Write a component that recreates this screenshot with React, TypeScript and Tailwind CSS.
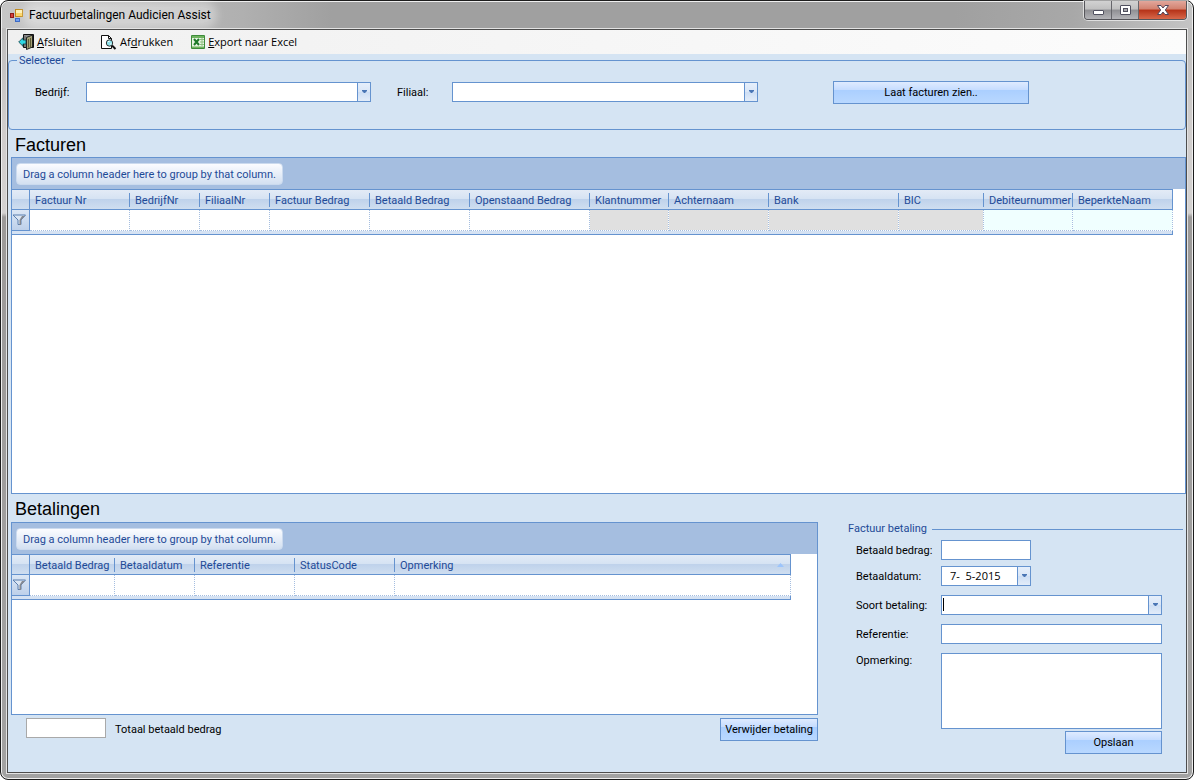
import type { ReactNode } from 'react';

interface Column {
  label: string;
  width: string;
  cell?: string;
  sorted?: boolean;
}

const invoiceColumns: Column[] = [
  { label: 'Factuur Nr', width: 'w-[100px]' },
  { label: 'BedrijfNr', width: 'w-[70px]' },
  { label: 'FiliaalNr', width: 'w-[70px]' },
  { label: 'Factuur Bedrag', width: 'w-[100px]' },
  { label: 'Betaald Bedrag', width: 'w-[100px]' },
  { label: 'Openstaand Bedrag', width: 'w-[120px]' },
  { label: 'Klantnummer', width: 'w-[79px]', cell: 'bg-[#e0e0e0]' },
  { label: 'Achternaam', width: 'w-[100px]', cell: 'bg-[#e0e0e0]' },
  { label: 'Bank', width: 'w-[130px]', cell: 'bg-[#e0e0e0]' },
  { label: 'BIC', width: 'w-[85px]', cell: 'bg-[#e0e0e0]' },
  { label: 'Debiteurnummer', width: 'w-[89px]', cell: 'bg-[#f0ffff]' },
  { label: 'BeperkteNaam', width: 'w-[100px]', cell: 'bg-[#f0ffff]' },
];

const paymentColumns: Column[] = [
  { label: 'Betaald Bedrag', width: 'w-[85px]' },
  { label: 'Betaaldatum', width: 'w-[80px]' },
  { label: 'Referentie', width: 'w-[100px]' },
  { label: 'StatusCode', width: 'w-[100px]' },
  { label: 'Opmerking', width: 'w-[396px]', sorted: true },
];

export default function App() {
  return (
    <div className="flex min-h-screen flex-col rounded-lg border border-[#1c1c1c] bg-[linear-gradient(to_bottom,#b9b9b9_0px,#cfcccb_120px,#d4d2d1_212px,#9c9a99_216px,#a2a2a2_100%)] font-['Roboto','Liberation_Sans',sans-serif] text-[11px] leading-[14px] text-black shadow-[inset_0_0_0_1px_#efefef]">
      <TitleBar />
      <div className="mx-[5px] mb-[5px] flex flex-1 flex-col border border-[#e3e3e3]">
        <div className="flex flex-1 flex-col border border-[#4d4d4d] bg-[#d5e4f3]">
          <Toolbar />
          <SelectionPanel />
          <main className="flex flex-1 flex-col pl-[3px]">
            <h2 className="flex h-[27px] items-center pt-[2px] pl-1 font-['Liberation_Sans',sans-serif] text-lg">
              Facturen
            </h2>
            <DataGrid columns={invoiceColumns} className="flex-1" tableWidth="w-[1161px]" />
            <div className="flex h-[278px]">
              <section className="flex min-w-0 flex-1 flex-col">
                <h2 className="flex h-[28px] items-center pt-[2px] pl-1 font-['Liberation_Sans',sans-serif] text-lg">
                  Betalingen
                </h2>
                <DataGrid columns={paymentColumns} className="h-[193px]" tableWidth="w-[779px]" />
                <div className="flex items-start pt-[3px] pl-[15px]">
                  <input id="total" className="h-5 w-20 border border-[#a9a9a9] bg-white px-1" />
                  <label htmlFor="total" className="pt-[5px] pl-[9px]">
                    Totaal betaald bedrag
                  </label>
                  <PushButton className="ml-auto w-[98px]">Verwijder betaling</PushButton>
                </div>
              </section>
              <PaymentForm />
            </div>
          </main>
        </div>
      </div>
    </div>
  );
}

function TitleBar() {
  return (
    <header className="mx-px mt-px flex h-[26px] items-start rounded-t-lg bg-[linear-gradient(to_right,#c6c6c6_0px,#b0b0b0_240px,#a0a0a0_330px,#a0a0a0_80%,#a8a8a8_90%,#c4c4c4_100%)] pr-[5px] pl-2">
      <div className="flex h-[26px] items-center gap-[6px]">
        <AppIcon />
        <h1 className="rounded-full bg-white/35 text-xs shadow-[0_0_8px_6px_rgba(255,255,255,0.35)]">
          Factuurbetalingen Audicien Assist
        </h1>
      </div>
      <div className="-mt-px ml-auto flex h-[19px] overflow-hidden rounded-b-[4px] border border-t-0 border-[#55555a] shadow-[0_0_0_1px_rgba(255,255,255,0.6)]">
        <button
          aria-label="Minimaliseren"
          className="flex w-[27px] justify-center border-r border-[#66666b] bg-[linear-gradient(to_bottom,#d2d2d2_0%,#c0c0c0_45%,#8f8f93_50%,#b4b4b8_100%)]"
        >
          <svg width="13" height="18" viewBox="0 0 13 18">
            <rect x="1.5" y="9.5" width="10" height="4" rx="0.5" fill="#fff" stroke="#50505f" />
          </svg>
        </button>
        <button
          aria-label="Maximaliseren"
          className="flex w-[27px] justify-center border-r border-[#66666b] bg-[linear-gradient(to_bottom,#d2d2d2_0%,#c0c0c0_45%,#8f8f93_50%,#b4b4b8_100%)]"
        >
          <svg width="13" height="18" viewBox="0 0 13 18">
            <rect x="1.5" y="4.5" width="10" height="9" rx="0.5" fill="#fff" stroke="#50505f" />
            <rect x="4.5" y="7.5" width="4" height="3" fill="#a8a8ac" stroke="#50505f" />
          </svg>
        </button>
        <button
          aria-label="Sluiten"
          className="flex w-[47px] justify-center bg-[linear-gradient(to_bottom,#e2a79c_0%,#d2816f_45%,#b53218_50%,#d8684a_100%)]"
        >
          <svg width="14" height="18" viewBox="0 0 14 18">
            <path
              d="M1.5 4.5h3.5l2 2.5 2-2.5h3.5l-3.2 4.5 3.2 4.5h-3.5l-2-2.5-2 2.5h-3.5l3.2-4.5z"
              fill="#fff"
              stroke="#50455a"
            />
          </svg>
        </button>
      </div>
    </header>
  );
}

function Toolbar() {
  return (
    <nav className="flex h-6 items-center gap-[18px] bg-gradient-to-r from-[#f0f0f0] to-[#fcfcfc] pl-[10px] font-['Open_Sans',sans-serif]">
      <button className="flex items-center gap-[3px]">
        <ExitIcon />
        <span>
          <u>A</u>fsluiten
        </span>
      </button>
      <button className="flex items-center gap-[3px]">
        <PreviewIcon />
        <span>
          Af<u>d</u>rukken
        </span>
      </button>
      <button className="flex items-center gap-[3px]">
        <ExcelIcon />
        <span>
          <u>E</u>xport naar Excel
        </span>
      </button>
    </nav>
  );
}

function SelectionPanel() {
  return (
    <fieldset className="h-[76px] rounded-[4px] border border-[#6593cf] pl-2">
      <legend className="pr-[7px] pl-[2px] leading-[13px] text-[#1e4a97]">Selecteer</legend>
      <div className="flex items-start pt-[14px] pl-[18px]">
        <label htmlFor="company" className="w-[51px] pt-[5px]">
          Bedrijf:
        </label>
        <ComboBox id="company" className="mt-px w-[285px]" />
        <label htmlFor="branch" className="ml-[26px] w-[55px] pt-[5px]">
          Filiaal:
        </label>
        <ComboBox id="branch" className="mt-px w-[306px]" />
        <PushButton className="ml-[75px] w-[196px]">Laat facturen zien..</PushButton>
      </div>
    </fieldset>
  );
}

function PaymentForm() {
  return (
    <form className="w-[368px] pt-[28px] pr-[3px] pl-[30px]">
      <div className="flex items-center gap-[5px] text-[#1e4a97]">
        <h3>Factuur betaling</h3>
        <div className="h-px flex-1 bg-[#6593cf]" />
      </div>
      <div className="mt-1 grid grid-cols-[85px_221px] pl-2 whitespace-nowrap">
        <label htmlFor="amount" className="pt-1">
          Betaald bedrag:
        </label>
        <input id="amount" className="mb-[6px] h-5 w-[90px] border border-[#6593cf] bg-white px-1" />
        <label htmlFor="date" className="pt-1">
          Betaaldatum:
        </label>
        <div className="mb-[9px] flex h-5 w-[90px] border border-[#6593cf] bg-white">
          <input
            id="date"
            defaultValue="7-  5-2015"
            className="w-[75px] pl-2 font-['Open_Sans',sans-serif] whitespace-pre"
          />
          <button type="button" aria-label="Kalender" className="flex-1">
            <DropArrow />
          </button>
        </div>
        <label htmlFor="kind" className="pt-1">
          Soort betaling:
        </label>
        <div className="relative mb-[9px]">
          <ComboBox id="kind" className="w-full" />
          <span className="absolute top-[3px] left-[2px] h-[13px] w-px bg-black" />
        </div>
        <label htmlFor="reference" className="pt-1">
          Referentie:
        </label>
        <input id="reference" className="mb-[9px] h-5 border border-[#6593cf] bg-white px-1" />
        <label htmlFor="remark" className="pt-px">
          Opmerking:
        </label>
        <textarea id="remark" className="h-[76px] resize-none border border-[#6593cf] bg-white p-1" />
        <PushButton className="col-start-2 mt-[2px] w-[97px] justify-self-end">Opslaan</PushButton>
      </div>
    </form>
  );
}

interface DataGridProps {
  columns: Column[];
  className: string;
  tableWidth: string;
}

function DataGrid({ columns, className, tableWidth }: DataGridProps) {
  return (
    <div className={`flex flex-col overflow-hidden border border-[#6593cf] bg-white ${className}`}>
      <div className="flex h-[31px] shrink-0 items-center bg-[#a5bee0] pl-1 text-[#1e4a97]">
        <div className="flex h-[22px] items-center rounded-[4px] border border-[#cbdaee] bg-gradient-to-b from-[#fbfcff] to-[#d3e0f1] px-[6px] pt-[2px]">
          Drag a column header here to group by that column.
        </div>
      </div>
      <div className={`shrink-0 ${tableWidth}`}>
        <table className="w-full table-fixed border-separate border-spacing-0 text-left">
          <thead>
            <tr className="h-[21px]">
              <th
                aria-label="Filter"
                className="w-[18px] border-y border-r border-[#6593cf] bg-[linear-gradient(to_bottom,#e3ebf6_0%,#d6e3f3_45%,#bfd2eb_50%,#cfdef0_100%)] p-0"
              />
              {columns.map((column, i) => (
                <th
                  key={column.label}
                  className={`border-y border-[#6593cf] bg-[linear-gradient(to_bottom,#e3ebf6_0%,#d6e3f3_45%,#bfd2eb_50%,#cfdef0_100%)] p-0 font-normal text-[#1e4a97] last:border-r ${column.width}`}
                >
                  <div
                    className={`flex h-[14px] items-center justify-between pl-[5px] whitespace-nowrap ${
                      i < columns.length - 1 ? 'border-r border-[#6593cf]' : ''
                    }`}
                  >
                    <span className="pt-[2px]">{column.label}</span>
                    {column.sorted && (
                      <svg width="7" height="4" viewBox="0 0 7 4" className="mr-[6px]">
                        <path d="M0 4 3.5 0 7 4z" fill="#9cc4fb" />
                      </svg>
                    )}
                  </div>
                </th>
              ))}
            </tr>
          </thead>
          <tbody>
            <tr className="h-[21px]">
              <td className="border-r border-b border-[#6593cf] bg-gradient-to-b from-[#dce7f5] to-[#bdd0ea] p-0">
                <FilterIcon />
              </td>
              {columns.map((column) => (
                <td
                  key={column.label}
                  className={`border-r border-b border-dotted border-[#a5bee0] bg-clip-padding p-0 ${column.cell ?? ''}`}
                />
              ))}
            </tr>
          </tbody>
        </table>
        <div className="h-1 border-r border-b border-[#6593cf] bg-[#d5e2f3]" />
      </div>
    </div>
  );
}

function ComboBox({ id, className }: { id: string; className: string }) {
  return (
    <div className={`relative h-5 ${className}`}>
      <select
        id={id}
        className="block h-full w-full appearance-none border border-[#6593cf] bg-white pr-4 pl-1 outline-none"
      />
      <span className="pointer-events-none absolute inset-y-px right-px w-[13px]">
        <DropArrow />
      </span>
    </div>
  );
}

function DropArrow() {
  return (
    <span className="flex h-full items-center justify-center border-l border-[#6593cf] bg-[linear-gradient(to_bottom,#e6effb_0%,#d9e6f7_50%,#cddef4_50%,#e2ecf9_100%)] pb-px">
      <svg width="5" height="3" viewBox="0 0 5 3">
        <path d="M0 0h5v1L3 3H2L0 1z" fill="#4a76b5" />
      </svg>
    </span>
  );
}

function PushButton({ className, children }: { className: string; children: ReactNode }) {
  return (
    <button
      type="button"
      className={`h-[23px] border border-[#6593cf] bg-[linear-gradient(to_bottom,#dfebff_0%,#c5dcff_38%,#abcfff_40%,#b9d8ff_100%)] pt-px whitespace-nowrap ${className}`}
    >
      {children}
    </button>
  );
}

function FilterIcon() {
  return (
    <svg width="16" height="14" viewBox="0 0 16 14" className="block">
      <path d="M1 2h12.5L9 7v4.5H6V7z" fill="#dbe6f4" stroke="#5b7fae" />
      <path d="M10 3h3L9 7v5H7.5V7z" fill="#85888f" />
    </svg>
  );
}

function AppIcon() {
  return (
    <svg width="13" height="14" viewBox="0 0 13 14">
      <rect x="0.5" y="5.5" width="3" height="4" fill="#d6413a" stroke="#8e1b17" />
      <rect x="5.5" y="1.5" width="7" height="7" fill="#fcd462" stroke="#c08a1c" />
      <path d="M6 2h6v3H6z" fill="#fdf0b4" />
      <rect x="5.5" y="10.5" width="4" height="3" fill="#6f9ff0" stroke="#3a68c4" />
    </svg>
  );
}

function ExitIcon() {
  return (
    <svg width="16" height="16" viewBox="0 0 16 16">
      <path d="M5.5 .5h10v13h-10z" fill="#8b8b8b" stroke="#111" />
      <path d="M6 2h2v11H6z" fill="#777" />
      <path d="M8.5 3.5 14.5 1v12l-6 2.5z" fill="#a5a277" stroke="#222" />
      <path d="M10.5 5v8.5M12.5 4v9" stroke="#5d5b38" />
      <path d="M.7 8 5 3.7V6h3v4H5v2.300z" fill="#2fd7e3" stroke="#163d42" strokeWidth="0.8" />
    </svg>
  );
}

function PreviewIcon() {
  return (
    <svg width="17" height="16" viewBox="0 0 17 16">
      <path d="M1.5 1.5h7l3 3v10h-10z" fill="#fff" stroke="#111" />
      <path d="M8.5 1.5v3h3" fill="none" stroke="#111" />
      <circle cx="9.5" cy="9" r="3.2" fill="#8fe3ec" stroke="#333" />
      <path d="M8 7.5h1.5M10 10h1.5" stroke="#fff" />
      <path d="m12 11.5 3.5 3.5" stroke="#111" strokeWidth="2" />
    </svg>
  );
}

function ExcelIcon() {
  return (
    <svg width="14" height="14" viewBox="0 0 14 14">
      <path d="M.5 .5h13v13H.5z" fill="#e9f5e4" stroke="#3d8b3a" />
      <path d="M1 1h12v2H1z" fill="#6fb35e" />
      <path d="M9 4.5h4M9 7h4M9 9.5h4M11 3v8" stroke="#8fc081" />
      <path d="m3 4 5 6M8 4l-5 6" stroke="#1f7a2a" strokeWidth="2" />
      <path d="M1 11.5h12V13H1z" fill="#6fb35e" />
    </svg>
  );
}
